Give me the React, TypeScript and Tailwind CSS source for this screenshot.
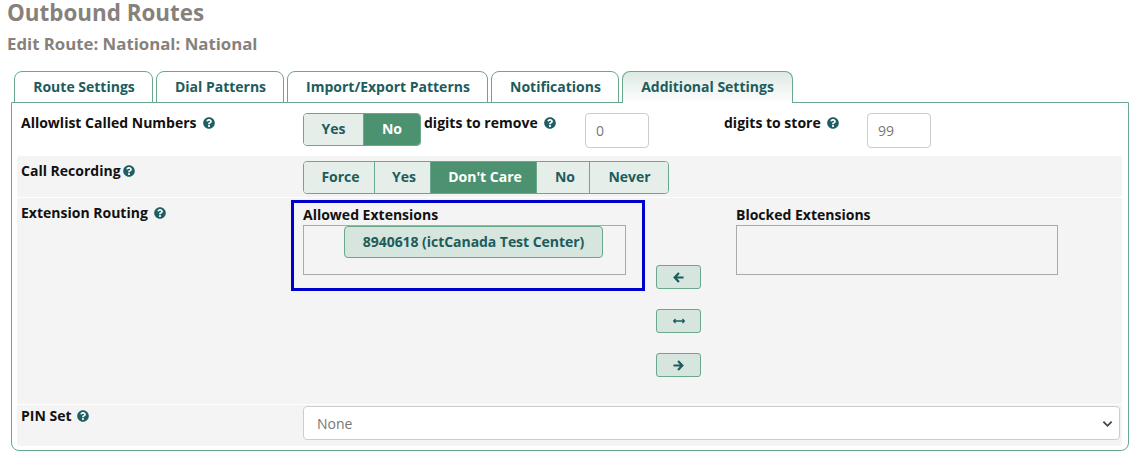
const font = { fontFamily: '"Open Sans", sans-serif' };

function Help() {
  return (
    <svg viewBox="0 0 512 512" className="w-[12px] h-[12px] shrink-0 fill-[#1d5f63]">
      <path d="M504 256c0 137-111 248-248 248S8 393 8 256 119 8 256 8s248 111 248 248zM262.700 90c-54.500 0-89.300 23-116.500 63.800-3.500 5.300-2.400 12.400 2.700 16.300l34.700 26.300c5.200 3.900 12.600 3 16.700-2.100 17.900-22.700 30.100-35.800 57.300-35.800 20.400 0 45.700 13.100 45.700 33 0 15-12.400 22.700-32.600 34-23.600 13.200-54.800 29.700-54.800 70.900V300c0 6.600 5.400 12 12 12h56c6.600 0 12-5.400 12-12v-1.300c0-28.600 83.500-29.800 83.500-107.100C379 133.400 318.600 90 262.700 90zM256 339c-25.500 0-46.200 20.700-46.200 46.200 0 25.500 20.700 46.200 46.200 46.200s46.200-20.700 46.200-46.200c0-25.500-20.700-46.200-46.200-46.200z" />
    </svg>
  );
}

function Segment({ items, active }: { items: { label: string; w: string; pad?: string }[]; active: string }) {
  return (
    <div className="flex h-[33px] rounded-[4px] border border-[#6aa88c] overflow-hidden">
      {items.map((it, i) => (
        <div
          key={it.label}
          className={`${it.w} ${it.pad ?? ""} pb-[2px] flex items-center justify-center text-[14px] font-bold ${i > 0 ? "border-l border-[#6aa88c]" : ""} ${
            it.label === active ? "bg-[#4c9270] text-white" : "bg-[#e6eeea] text-[#1d5c5c]"
          }`}
        >
          {it.label}
        </div>
      ))}
    </div>
  );
}

function ArrowButton({ children }: { children: React.ReactNode }) {
  return (
    <div className="w-[45px] h-[24px] flex items-center justify-center rounded-[3px] border border-[#6aa88c] bg-[#d6e5dd]">
      {children}
    </div>
  );
}

const tabs = [
  { label: "Route Settings", w: "w-[139px]" },
  { label: "Dial Patterns", w: "w-[128px]" },
  { label: "Import/Export Patterns", w: "w-[201px]" },
  { label: "Notifications", w: "w-[128px]" },
  { label: "Additional Settings", w: "w-[171px]" },
];

export default function App() {
  return (
    <div style={font} className="w-[1133px] h-[451px] bg-white overflow-hidden relative text-[14px]">
      <div className="h-[71px] pl-[7px] pt-[1px]">
        <h1 className="text-[22.4px] leading-[24px] font-bold text-[#87817c]">Outbound Routes</h1>
        <h2 className="mt-[7px] text-[16.8px] leading-[24px] font-bold text-[#87817c]">Edit Route: National: National</h2>
      </div>
      <div className="pl-[14px] flex gap-[3px] h-[32px] relative z-10">
        {tabs.map((t) => {
          const active = t.label === "Additional Settings";
          return (
            <div
              key={t.label}
              className={`${t.w} flex items-center justify-center rounded-t-[8px] border border-[#6aa88c] font-bold text-[14px] text-[#1d5c5c] pb-[2px] ${
                active ? "border-b-0 bg-gradient-to-b from-[#dde9e3] to-white" : "bg-white pl-[1px]"
              }`}
            >
              {t.label}
            </div>
          );
        })}
      </div>
      <div className="ml-[11px] mr-[4px] -mt-[1px] h-[349px] border border-[#6aa88c] rounded-b-[8px] px-[5px]">
        <div className="h-[53px] flex text-[#111] font-bold">
          <div className="w-[286px] pl-[4px] pt-[10px] flex items-start gap-[6px] leading-[19px]">
            <span>Allowlist Called Numbers</span>
            <span className="pt-[4px]"><Help /></span>
          </div>
          <div className="pt-[10px]">
            <Segment active="No" items={[{ label: "Yes", w: "w-[59px]" }, { label: "No", w: "w-[57px]" }]} />
          </div>
          <div className="ml-[3px] w-[161px] pt-[10px] flex items-start gap-[6px] leading-[19px]">
            <span>digits to remove</span>
            <span className="pt-[4px]"><Help /></span>
          </div>
          <div className="pt-[10px]">
            <div className="w-[64px] h-[35px] rounded-[4px] border border-[#ccc] pl-[10px] flex items-center text-[14px] font-normal text-[#777]">0</div>
          </div>
          <div className="ml-[75px] w-[143px] pt-[10px] flex items-start gap-[6px] leading-[19px]">
            <span>digits to store</span>
            <span className="pt-[4px]"><Help /></span>
          </div>
          <div className="pt-[10px]">
            <div className="w-[64px] h-[35px] rounded-[4px] border border-[#ccc] pl-[10px] flex items-center text-[14px] font-normal text-[#777]">99</div>
          </div>
        </div>

        <div className="h-[41px] mr-[1px] bg-[#f4f4f4] rounded-[3px] flex font-bold text-[#111]">
          <div className="w-[286px] pl-[4px] pt-[5px] flex items-start gap-[2px] leading-[19px]">
            <span>Call Recording</span>
            <span className="pt-[4px]"><Help /></span>
          </div>
          <div className="pt-[5px]">
            <Segment
              active="Don't Care"
              items={[
                { label: "Force", w: "w-[70px]", pad: "pl-[3px]" },
                { label: "Yes", w: "w-[56px]", pad: "pl-[3px]" },
                { label: "Don't Care", w: "w-[106px]", pad: "pl-[3px]" },
                { label: "No", w: "w-[53px]", pad: "pl-[4px]" },
                { label: "Never", w: "w-[79px]", pad: "pl-[1px]" },
              ]}
            />
          </div>
        </div>

        <div className="mt-[1px] h-[206px] mr-[1px] bg-[#f4f4f4] flex font-bold text-[#111]">
          <div className="w-[286px] pl-[4px] pt-[5px] flex items-start gap-[6px] leading-[19px]">
            <span>Extension Routing</span>
            <span className="pt-[4px]"><Help /></span>
          </div>
          <div className="w-[323px] shrink-0 relative">
            <div className="absolute -left-[12px] top-[2px] w-[354px] h-[91px] border-[3px] border-[#0000cc] pointer-events-none" />
            <div className="pt-[7px] leading-[19px]">Allowed Extensions</div>
            <div className="w-[323px] h-[50px] mt-[1px] border border-[#aaa]">
              <div className="w-[259px] h-[32px] ml-[40px] pb-[2px] rounded-[4px] border border-[#6aa88c] bg-[#d6e5dd] text-[#1d5c5c] tracking-[-0.05px] flex items-center justify-center">
                8940618 (ictCanada Test Center)
              </div>
            </div>
          </div>
          <div className="ml-[30px] pt-[67px] flex flex-col gap-[20px]">
            <ArrowButton>
              <svg viewBox="0 0 12 12" className="w-[11px] h-[11px] fill-none stroke-[#1d5c5c] stroke-[2.400px]"><path d="M6.500 1 1.800 6l4.700 5M2 6h9.500" /></svg>
            </ArrowButton>
            <ArrowButton>
              <svg viewBox="0 0 12 12" className="w-[12px] h-[12px] fill-none stroke-[#1d5c5c] stroke-[1.300px]"><path d="M.5 6h11M2.500 4 .7 6l1.800 2M9.500 4l1.800 2-1.800 2" /></svg>
            </ArrowButton>
            <ArrowButton>
              <svg viewBox="0 0 12 12" className="w-[11px] h-[11px] fill-none stroke-[#1d5c5c] stroke-[2.400px]"><path d="M5.500 1l4.700 5-4.700 5M.5 6H10" /></svg>
            </ArrowButton>
          </div>
          <div className="ml-[35px]">
            <div className="pt-[7px] leading-[19px]">Blocked Extensions</div>
            <div className="w-[322px] h-[50px] mt-[1px] border border-[#aaa]" />
          </div>
        </div>

        <div className="mt-[1px] h-[41px] mr-[1px] bg-[#f4f4f4] rounded-b-[3px] flex font-bold text-[#111]">
          <div className="w-[286px] pl-[4px] pt-[1px] flex items-start gap-[5px] leading-[19px]">
            <span>PIN Set</span>
            <span className="pt-[4px]"><Help /></span>
          </div>
          <div className="w-[817px] h-[34px] mt-[1px] rounded-[4px] border border-[#ccc] bg-white flex items-center justify-between pl-[13px] pr-[6px] font-normal text-[#777]">
            <span>None</span>
            <svg viewBox="0 0 12 12" className="w-[11px] h-[11px] fill-none stroke-[#444] stroke-[2px]"><path d="M1.500 4 6 8.500 10.500 4" /></svg>
          </div>
        </div>
      </div>
    </div>
  );
}
